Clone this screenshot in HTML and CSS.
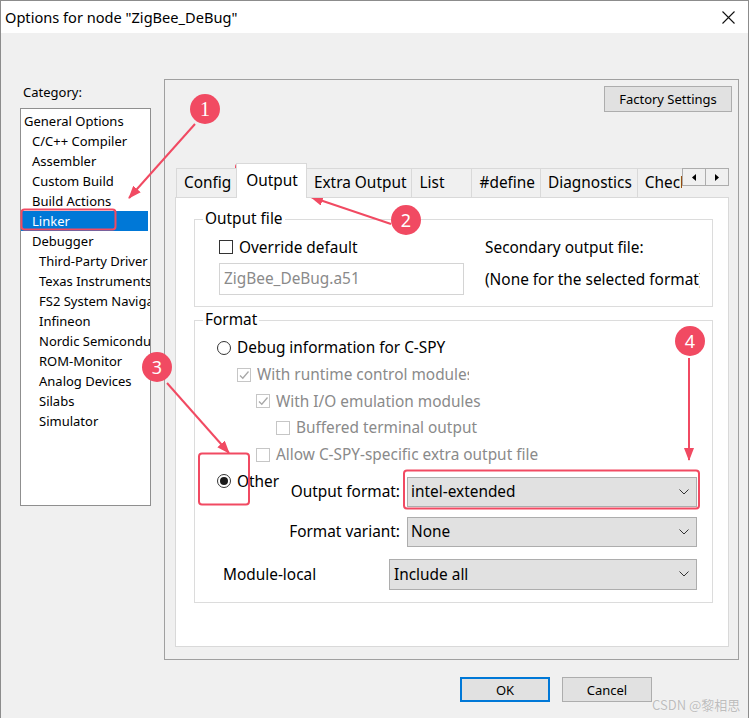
FILE: index.html
```html
<!DOCTYPE html>
<html lang="en">
<head>
    <meta charset="UTF-8">
    <title>Options for node "ZigBee_DeBug"</title>
    <link rel="stylesheet" href="styles.css">
</head>
<body>
    <div class="window">
        <div class="titlebar">
            <span class="title">Options for node "ZigBee_DeBug"</span>
            <svg class="close" width="13" height="13" viewBox="0 0 13 13">
                <path d="M0.5 0.5L12.5 12.5M12.5 0.5L0.5 12.5" stroke="#111" stroke-width="1.1" fill="none"/>
            </svg>
        </div>

        <div class="main">
            <div class="category">
                <div class="category-label">Category:</div>
                <ul class="category-list">
                    <li>General Options</li>
                    <li class="sub">C/C++ Compiler</li>
                    <li class="sub">Assembler</li>
                    <li class="sub">Custom Build</li>
                    <li class="sub">Build Actions</li>
                    <li class="sub selected">Linker</li>
                    <li class="sub">Debugger</li>
                    <li class="sub2">Third-Party Driver</li>
                    <li class="sub2">Texas Instruments</li>
                    <li class="sub2">FS2 System Navigator</li>
                    <li class="sub2">Infineon</li>
                    <li class="sub2">Nordic Semiconductor</li>
                    <li class="sub2">ROM-Monitor</li>
                    <li class="sub2">Analog Devices</li>
                    <li class="sub2">Silabs</li>
                    <li class="sub2">Simulator</li>
                </ul>
            </div>

            <div class="panel">
                <div class="panel-top">
                    <button class="btn factory">Factory Settings</button>
                </div>

                <div class="tab-row">
                    <div class="tab-strip">
                        <div class="tab">Config</div>
                        <div class="tab active">Output</div>
                        <div class="tab">Extra Output</div>
                        <div class="tab">List</div>
                        <div class="tab">#define</div>
                        <div class="tab">Diagnostics</div>
                        <div class="tab">Checksum</div>
                    </div>
                    <div class="tab-arrows">
                        <span class="arrow-btn"><svg width="4" height="7" viewBox="0 0 4 7"><path d="M4 0L0 3.5L4 7Z" fill="#000"/></svg></span>
                        <span class="arrow-btn"><svg width="4" height="7" viewBox="0 0 4 7"><path d="M0 0L4 3.5L0 7Z" fill="#000"/></svg></span>
                    </div>
                </div>

                <div class="tab-page">
                    <fieldset class="group output-group">
                        <legend>Output file</legend>
                        <div class="output-grid">
                            <div class="check-line"><span class="box"></span>Override default</div>
                            <div class="note">Secondary output file:</div>
                            <div class="textbox">ZigBee_DeBug.a51</div>
                            <div class="note">(None for the selected format)</div>
                        </div>
                    </fieldset>

                    <fieldset class="group format-group">
                        <legend>Format</legend>
                        <div class="option first"><span class="radio"></span>Debug information for C-SPY</div>
                        <div class="option lvl1 disabled"><span class="box ticked"><svg width="12" height="12" viewBox="0 0 12 12"><path d="M2 6.5L4.8 9.2L10.5 2.5" stroke="#a8a8a8" stroke-width="1.3" fill="none"/></svg></span><span class="cut">With runtime control modules</span></div>
                        <div class="option lvl2 disabled"><span class="box ticked"><svg width="12" height="12" viewBox="0 0 12 12"><path d="M2 6.5L4.8 9.2L10.5 2.5" stroke="#a8a8a8" stroke-width="1.3" fill="none"/></svg></span>With I/O emulation modules</div>
                        <div class="option lvl3 disabled"><span class="box"></span>Buffered terminal output</div>
                        <div class="option lvl2 disabled"><span class="box"></span>Allow C-SPY-specific extra output file</div>

                        <div class="other-block">
                            <div class="option other"><span class="radio on"></span>Other</div>
                            <div class="other-fields">
                                <div class="field-row">
                                    <span class="field-label">Output format:</span>
                                    <div class="combo">intel-extended<svg width="10" height="6" viewBox="0 0 10 6"><path d="M0.5 0.5L5 5L9.5 0.5" stroke="#333" fill="none"/></svg></div>
                                </div>
                                <div class="field-row">
                                    <span class="field-label">Format variant:</span>
                                    <div class="combo">None<svg width="10" height="6" viewBox="0 0 10 6"><path d="M0.5 0.5L5 5L9.5 0.5" stroke="#333" fill="none"/></svg></div>
                                </div>
                            </div>
                        </div>

                        <div class="module-row">
                            <span class="module-label">Module-local</span>
                            <div class="combo wide">Include all<svg width="10" height="6" viewBox="0 0 10 6"><path d="M0.5 0.5L5 5L9.5 0.5" stroke="#333" fill="none"/></svg></div>
                        </div>
                    </fieldset>
                </div>
            </div>
        </div>

        <div class="footer">
            <button class="btn ok">OK</button>
            <button class="btn">Cancel</button>
        </div>
    </div>

    <div class="watermark">CSDN @黎相思</div>

    <!-- red call-outs drawn over the dialog -->
    <svg class="annotations" width="749" height="718" viewBox="0 0 749 718">
        <defs>
            <marker id="head" markerWidth="13" markerHeight="10" refX="12" refY="5" orient="auto" markerUnits="userSpaceOnUse">
                <path d="M0 0L13 5L0 10Z" fill="#f14a62"/>
            </marker>
        </defs>
        <g fill="none" stroke="#f14a62" stroke-width="2">
            <rect x="21.5" y="209.5" width="94" height="20" rx="3"/>
            <rect x="236" y="164" width="69" height="33" rx="3"/>
            <rect x="199" y="453.5" width="50" height="51" rx="3"/>
            <rect x="404" y="470.5" width="295" height="38" rx="3"/>
            <line x1="195" y1="124" x2="129" y2="198" marker-end="url(#head)"/>
            <line x1="391" y1="224" x2="311" y2="197" marker-end="url(#head)"/>
            <line x1="167" y1="383" x2="229" y2="453" marker-end="url(#head)"/>
            <line x1="689" y1="358" x2="689" y2="460" marker-end="url(#head)"/>
        </g>
        <g fill="#f14a62">
            <circle cx="205" cy="109" r="15"/>
            <circle cx="406" cy="220" r="15"/>
            <circle cx="157" cy="367" r="15"/>
            <circle cx="690" cy="341" r="15"/>
        </g>
        <g fill="#fff" font-size="18" text-anchor="middle" font-family="Noto Sans, sans-serif">
            <text x="205" y="115.5" font-family="Liberation Serif, serif" font-size="20">1</text>
            <text x="406" y="226.5">2</text>
            <text x="157" y="373.5">3</text>
            <text x="690" y="347.5">4</text>
        </g>
    </svg>
</body>
</html>
```

FILE: styles.css
```css
* {
    box-sizing: border-box;
}

body {
    margin: 0;
    font-family: "Noto Sans", "Liberation Sans", sans-serif;
    color: #000;
    background: #fff;
}

.window {
    width: 749px;
    height: 718px;
    border: 1px solid #8c8c8c;
    border-bottom: none;
    background: #f0f0f0;
    display: flex;
    flex-direction: column;
}

.titlebar {
    height: 32px;
    flex-shrink: 0;
    background: #fff;
    display: flex;
    align-items: center;
    justify-content: space-between;
    padding: 0 13px 0 4px;
    font-size: 14.6px;
}

.main {
    display: flex;
}

/* Category tree */
.category {
    width: 131px;
    margin-left: 19px;
    padding-top: 51px;
    font-size: 13px;
}

.category-label {
    line-height: 16px;
    padding-left: 3px;
}

.category-list {
    list-style: none;
    margin: 8px 0 0;
    padding: 2px 0 0;
    height: 398px;
    border: 1px solid #8f8f8f;
    background: #fff;
    overflow: hidden;
}

.category-list li {
    line-height: 20px;
    white-space: nowrap;
    padding-left: 3px;
}

.category-list li.sub {
    padding-left: 11px;
}

.category-list li.sub2 {
    padding-left: 18px;
}

.category-list li.selected {
    background: #0078d7;
    color: #fff;
    margin-right: 2px;
}

/* Right hand panel */
.panel {
    margin: 46px 0 0 13px;
    width: 575px;
    height: 581px;
    border: 1px solid #a0a0a0;
    display: flex;
    flex-direction: column;
    font-size: 15.4px;
}

.panel-top {
    display: flex;
    justify-content: flex-end;
    padding: 6px 6px 0 0;
}

.btn {
    font-family: "Noto Sans", "Liberation Sans", sans-serif;
    font-size: 13px;
    color: #000;
    background: #e1e1e1;
    border: 1px solid #adadad;
    height: 25px;
    width: 90px;
    padding: 0;
}

.factory {
    width: 128px;
    height: 26px;
}

.tab-row {
    display: flex;
    height: 35px;
    margin: 51px 0 -1px 11px;
    position: relative;
    z-index: 1;
}

.tab-strip {
    display: flex;
    align-items: flex-end;
    width: 506px;
    overflow: hidden;
}

.tab {
    flex-shrink: 0;
    height: 30px;
    min-width: 61px;
    padding: 0 5px 0 7px;
    line-height: 28px;
    border: 1px solid #d9d9d9;
    margin-left: -1px;
    background: #f0f0f0;
    white-space: nowrap;
}

.tab:first-child {
    margin-left: 0;
}

.tab.active {
    height: 35px;
    line-height: 33px;
    padding: 0 8px 0 9px;
    border-bottom: none;
    background: #fff;
}

.tab-arrows {
    display: flex;
    margin-top: 5px;
    height: 18px;
}

.arrow-btn {
    width: 24px;
    height: 18px;
    border: 1px solid #adadad;
    background: #f0f0f0;
    display: flex;
    align-items: center;
    justify-content: center;
}

.arrow-btn + .arrow-btn {
    margin-left: -1px;
}

.tab-page {
    margin-left: 10px;
    width: 554px;
    height: 450px;
    background: #fff;
    border: 1px solid #d9d9d9;
    overflow: hidden;
}

/* Group boxes */
.group {
    margin: 11px 15px 0 18px;
    padding: 0;
    border: 1px solid #dcdcdc;
    min-width: 0;
}

.group legend {
    margin-left: 8px;
    padding: 0 2px;
    line-height: 20px;
}

.format-group {
    margin-top: 3px;
    padding-bottom: 12px;
}

.output-grid {
    display: grid;
    grid-template-columns: 266px 215px;
    grid-template-rows: 20px 32px;
    row-gap: 6px;
    align-items: center;
    margin: 8px 0 0 24px;
    padding-bottom: 11px;
}

.check-line {
    display: flex;
    align-items: center;
    white-space: nowrap;
}

.note {
    white-space: nowrap;
    overflow: hidden;
}

.textbox {
    width: 245px;
    height: 32px;
    border: 1px solid #d4d4d4;
    padding-left: 4px;
    line-height: 30px;
    color: #8a8a8a;
}

.box {
    width: 14px;
    height: 14px;
    flex-shrink: 0;
    border: 1px solid #333;
    background: #fff;
    margin-right: 6px;
    display: flex;
    align-items: center;
    justify-content: center;
}

.disabled {
    color: #8a8a8a;
}

.disabled .box {
    border-color: #c6c6c6;
}

.radio {
    width: 14px;
    height: 14px;
    flex-shrink: 0;
    border: 1px solid #333;
    border-radius: 50%;
    background: #fff;
    margin-right: 6px;
    display: flex;
    align-items: center;
    justify-content: center;
}

.radio.on::after {
    content: "";
    width: 8px;
    height: 8px;
    border-radius: 50%;
    background: #1a1a1a;
}

.option {
    height: 26.7px;
    display: flex;
    align-items: center;
    padding-left: 22px;
    white-space: nowrap;
}

.option.first {
    margin-top: 4.5px;
}

.option.lvl1 {
    padding-left: 42px;
}

.option.lvl2 {
    padding-left: 61px;
}

.option.lvl3 {
    padding-left: 81px;
}

.cut {
    display: inline-block;
    width: 212px;
    overflow: hidden;
}

.other-block {
    display: flex;
}

.option.other {
    width: 90px;
    flex-shrink: 0;
}

.other-fields {
    margin-top: 9px;
    display: flex;
    flex-direction: column;
    gap: 10px;
}

.field-row {
    display: flex;
    align-items: center;
    height: 30px;
}

.field-label {
    width: 115px;
    margin-right: 7px;
    text-align: right;
    white-space: nowrap;
}

.combo {
    width: 290px;
    height: 30px;
    border: 1px solid #adadad;
    background: #e1e1e1;
    display: flex;
    align-items: center;
    justify-content: space-between;
    padding: 0 7px 0 3px;
}

.combo.wide {
    width: 308px;
    height: 31px;
    padding-left: 4px;
}

.module-row {
    display: flex;
    align-items: center;
    margin: 12px 0 0 28px;
    height: 31px;
}

.module-label {
    width: 166px;
}

.footer {
    display: flex;
    justify-content: flex-end;
    gap: 12px;
    margin-top: 17px;
    padding-right: 96px;
}

.btn.ok {
    border: 2px solid #0078d7;
}

.watermark {
    position: absolute;
    left: 652px;
    top: 695px;
    font-family: "Noto Sans CJK SC", sans-serif;
    font-size: 13px;
    color: #bdbdbd;
    text-shadow: 0 0 1px #fff;
}

.annotations {
    position: absolute;
    left: 0;
    top: 0;
    pointer-events: none;
}
```
